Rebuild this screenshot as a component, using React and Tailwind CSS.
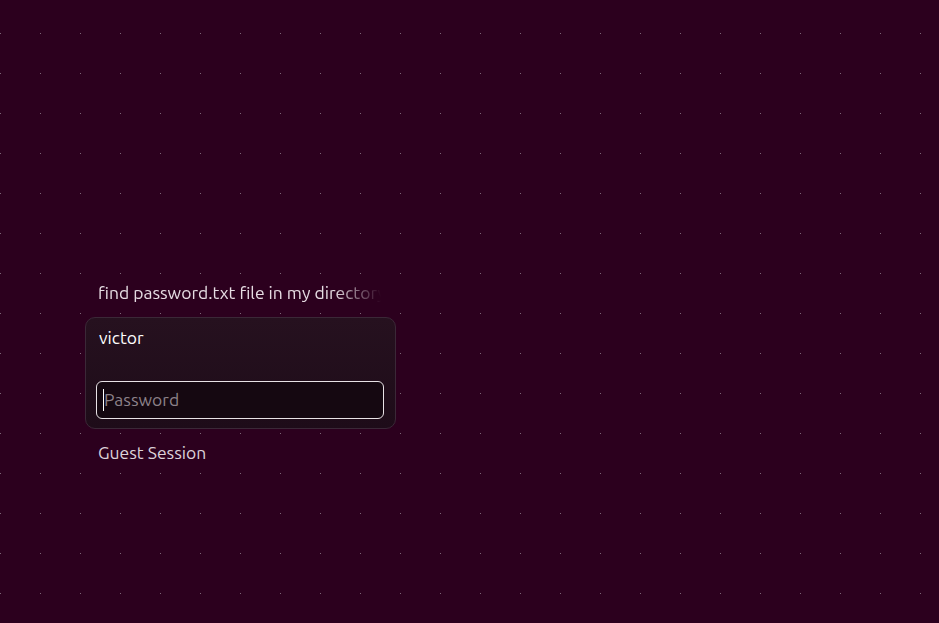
const DotGrid = () => (
  <svg className="absolute inset-0 h-full w-full" aria-hidden="true">
    <defs>
      <pattern id="dots" x="0" y="33" width="40" height="40" patternUnits="userSpaceOnUse">
        <rect x="0" y="0" width="1" height="1" fill="#7e6678" />
      </pattern>
    </defs>
    <rect width="100%" height="100%" fill="url(#dots)" />
  </svg>
)

const App = () => {
  return (
    <div className="relative h-[623px] w-[939px] overflow-hidden bg-[#2c001e] font-['Ubuntu','Open_Sans',sans-serif]">
      <DotGrid />
      <div className="relative flex flex-col pl-[85px] pt-[281px]">
        <div className="w-[296px] pl-[13px] text-[17.5px] leading-[24px] text-[#e6dce3] whitespace-nowrap overflow-hidden [mask-image:linear-gradient(to_right,black_84%,transparent_100%)]">
          find password.txt file in my directory
        </div>

        <div className="mt-[12px] flex h-[112px] w-[311px] flex-col rounded-[10px] border border-[#3b2837] bg-gradient-to-b from-[#26111f] to-[#1e0c19] px-[10px] pt-[8px]">
          <div className="pl-[3px] text-[17.5px] leading-[24px] text-white">victor</div>
          <div className="mt-[31px] flex h-[38px] w-[288px] items-center rounded-[6px] border border-[#e8e2e6] bg-[#150811] pl-[6px]">
            <span className="h-[22px] w-px bg-white" />
            <span className="text-[17.5px] text-[#8c8189]">Password</span>
          </div>
        </div>

        <div className="mt-[12px] pl-[13px] text-[17.5px] leading-[24px] text-[#dcd2d9]">Guest Session</div>
      </div>
    </div>
  )
}

export default App
